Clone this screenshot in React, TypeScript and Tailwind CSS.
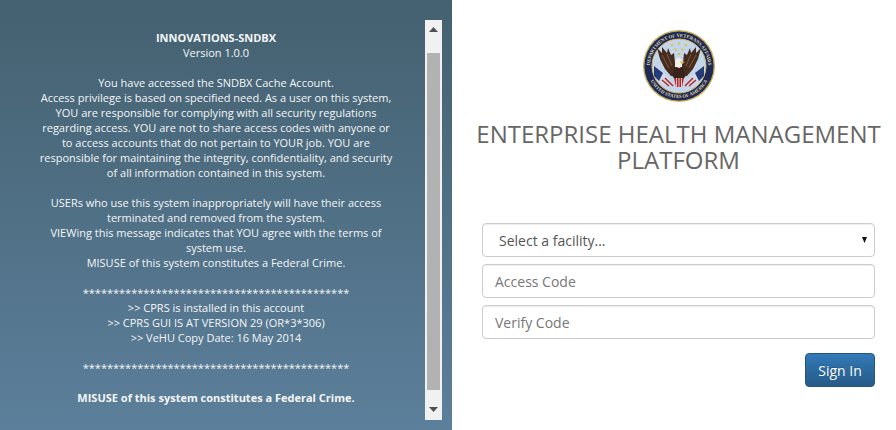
const font = { fontFamily: '"Open Sans", sans-serif' };

function VaSeal() {
  return (
    <svg width="72" height="72" viewBox="0 0 72 72">
      <defs>
        <path id="sealTop" d="M 8 44 A 29.1 29.1 0 1 1 64 44" />
        <path id="sealBottom" d="M 5 44 A 32 32 0 0 0 67 44" />
      </defs>
      <circle cx="36" cy="36" r="36" fill="#c9ab55" />
      <circle cx="36" cy="36" r="34.6" fill="#1c2a55" />
      <circle cx="36" cy="36" r="27" fill="#c3d5e8" stroke="#d8be6a" strokeWidth="1" />
      <text fontSize="4.8" fontWeight="700" fill="#e4d9a8" style={{ fontFamily: '"Liberation Serif", serif' }}>
        <textPath href="#sealTop" startOffset="50%" textAnchor="middle">DEPARTMENT OF VETERANS AFFAIRS</textPath>
      </text>
      <text fontSize="4.8" fontWeight="700" fill="#e4d9a8" style={{ fontFamily: '"Liberation Serif", serif' }}>
        <textPath href="#sealBottom" startOffset="50%" textAnchor="middle">UNITED STATES OF AMERICA</textPath>
      </text>
      {/* stars */}
      <g fill="#dcc15a">
        <circle cx="29" cy="15" r="1.3" />
        <circle cx="36" cy="13.5" r="1.3" />
        <circle cx="43" cy="15" r="1.3" />
        <circle cx="32.5" cy="19.5" r="1.3" />
        <circle cx="39.5" cy="19.5" r="1.3" />
        <circle cx="36" cy="24" r="1.3" />
      </g>
      {/* flags */}
      <path d="M11 36 L24 46 L31 57 L20 55 L11 46 Z" fill="#d5dbe6" />
      <path d="M11 36 L20 43 L16 51 L11 46 Z" fill="#243a7a" />
      <path d="M22 48 L30 56 M19 50 L26 56" stroke="#b3262e" strokeWidth="1.6" />
      <path d="M61 36 L48 46 L41 57 L52 55 L61 46 Z" fill="#d5dbe6" />
      <path d="M61 36 L52 43 L56 51 L61 46 Z" fill="#243a7a" />
      <path d="M50 48 L42 56 M53 50 L46 56" stroke="#b3262e" strokeWidth="1.6" />
      {/* wings and body */}
      <path d="M14 18 L19 23 L19 17 L24 23 L25 18 L28 25 L31 23 L32 33 L35 38 L34 47 L28 46 L22 39 L17 29 Z" fill="#452c1e" />
      <path d="M58 18 L53 23 L53 17 L48 23 L47 18 L44 25 L41 23 L40 33 L37 38 L38 47 L44 46 L50 39 L55 29 Z" fill="#452c1e" />
      <path d="M19 25 L26 38 M24 24 L29 36 M53 25 L46 38 M48 24 L43 36" stroke="#7d5a3f" strokeWidth="1" />
      <path d="M31 38 L41 38 L42 47 L36 53 L30 47 Z" fill="#38221a" />
      <path d="M32 30 Q36 26 39 30 L39 37 L32 37 Z" fill="#f2f0e8" />
      <path d="M37 31 L42 32 L38 34 Z" fill="#dcc15a" />
      <path d="M31 48 L41 48 L39 57 L33 57 Z" fill="#b3262e" />
      <path d="M33.5 48 V57 M36 48 V57 M38.5 48 V57" stroke="#eee" strokeWidth="0.8" />
    </svg>
  );
}

function Caret({ down }: { down?: boolean }) {
  return (
    <svg width="9" height="5" viewBox="0 0 9 5" className="block">
      <path d={down ? "M0 0H9L4.5 5Z" : "M4.5 0L9 5H0Z"} fill="#505050" />
    </svg>
  );
}

const lines = [
  "Access privilege is based on specified need. As a user on this system,",
  "YOU are responsible for complying with all security regulations",
  "regarding access. YOU are not to share access codes with anyone or",
  "to access accounts that do not pertain to YOUR job. YOU are",
  "responsible for maintaining the integrity, confidentiality, and security",
  "of all information contained in this system.",
];

export default function App() {
  return (
    <div className="flex h-[430px] w-[896px] overflow-hidden bg-white" style={font}>
      <div className="flex w-[452px] bg-gradient-to-b from-[#446170] to-[#5c7f9b] pl-[7px] pr-[10px] pt-[20px] pb-[10px]">
        <div className="flex-1 pt-[10px] text-center text-[11px] leading-[15px] text-[#f4f6f7]">
          <div className="font-bold">INNOVATIONS-SNDBX</div>
          <div>Version 1.0.0</div>
          <div className="mt-[15px]">You have accessed the SNDBX Cache Account.</div>
          {lines.map((line) => (
            <div key={line}>{line}</div>
          ))}
          <div className="mt-[15px]">USERs who use this system inappropriately will have their access</div>
          <div>terminated and removed from the system.</div>
          <div>VIEWing this message indicates that YOU agree with the terms of</div>
          <div>system use.</div>
          <div>MISUSE of this system constitutes a Federal Crime.</div>
          <div className="mt-[15px]">********************************************</div>
          <div>&gt;&gt; CPRS is installed in this account</div>
          <div>&gt;&gt; CPRS GUI IS AT VERSION 29 (OR*3*306)</div>
          <div>&gt;&gt; VeHU Copy Date: 16 May 2014</div>
          <div className="mt-[15px]">********************************************</div>
          <div className="mt-[15px] font-bold">MISUSE of this system constitutes a Federal Crime.</div>
        </div>
        <div className="flex w-[17px] flex-col items-center bg-[#f1f1f1]">
          <div className="flex h-[33px] w-full items-start justify-center pt-[7px]">
            <Caret />
          </div>
          <div className="h-[337px] w-[13px] bg-[#b2b2b2]" />
          <div className="flex flex-1 w-full items-end justify-center pb-[8px]">
            <Caret down />
          </div>
        </div>
      </div>

      <div className="flex flex-1 flex-col pl-[30px] pr-[21px]">
        <div className="mt-[30px] flex justify-center">
          <VaSeal />
        </div>
        <h1 className="-mx-[10px] mt-[19px] text-center text-[24px] font-normal leading-[26px] text-[#666666]">
          ENTERPRISE HEALTH MANAGEMENT<br />PLATFORM
        </h1>
        <div className="mt-[50px] flex flex-col gap-[7px]">
          <div className="relative">
            <select className="block h-[34px] w-full appearance-none rounded border border-[#cccccc] bg-white pl-[16px] text-[14px] text-[#555555] shadow-[inset_0_1px_1px_rgba(0,0,0,0.075)]">
              <option>Select a facility...</option>
            </select>
            <svg width="5" height="6" viewBox="0 0 5 6" className="absolute right-[8px] top-[14px]">
              <path d="M0 0H5L2.5 6Z" fill="#111111" />
            </svg>
          </div>
          <input
            placeholder="Access Code"
            className="block h-[34px] w-full rounded border border-[#cccccc] bg-white px-[12px] text-[14px] text-[#555555] shadow-[inset_0_1px_1px_rgba(0,0,0,0.075)] placeholder:text-[#777777]"
          />
          <input
            placeholder="Verify Code"
            className="block h-[34px] w-full rounded border border-[#cccccc] bg-white px-[12px] text-[14px] text-[#555555] shadow-[inset_0_1px_1px_rgba(0,0,0,0.075)] placeholder:text-[#777777]"
          />
        </div>
        <div className="mt-[14px] flex justify-end">
          <button className="h-[34px] w-[70px] rounded border border-[#245580] bg-gradient-to-b from-[#337ab7] to-[#265a88] text-[14px] text-white [text-shadow:0_-1px_0_rgba(0,0,0,0.2)]">
            Sign In
          </button>
        </div>
      </div>
    </div>
  );
}
